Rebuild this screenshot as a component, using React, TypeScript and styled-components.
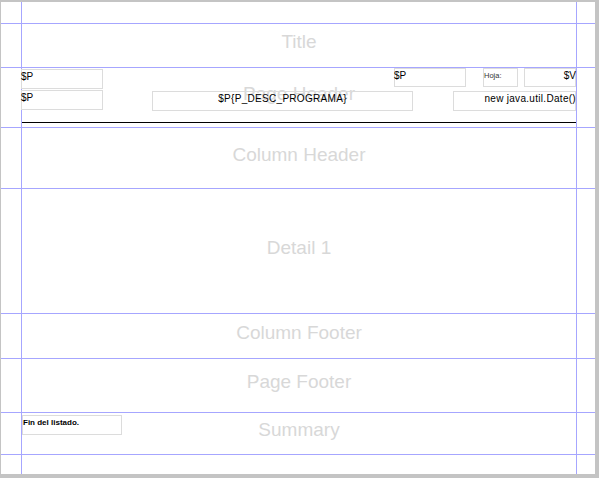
import React from "react";
import styled, { createGlobalStyle } from "styled-components";

const Global = createGlobalStyle`
  html, body { margin: 0; padding: 0; background: #c4c4c4; }
  body { font-family: "Liberation Sans", Arial, sans-serif; }
`;

const GUIDE = "#a6a6ff";

const Page = styled.div`
  margin: 2px 0 0 1px;
  width: 594px;
  background: #ffffff;
  display: flex;
  flex-direction: column;
`;

const Row = styled.div<{ $h: number; $last?: boolean }>`
  display: grid;
  grid-template-columns: 21px 555px 18px;
  height: ${(p) => p.$h}px;
  border-bottom: ${(p) => (p.$last ? "none" : `1px solid ${GUIDE}`)};
`;

const Margin = styled.div`
  box-sizing: border-box;
  border-right: 1px solid ${GUIDE};
`;

const Band = styled.div`
  box-sizing: border-box;
  border-right: 1px solid ${GUIDE};
  position: relative;
  display: flex;
  align-items: center;
  justify-content: center;
  padding-bottom: 7px;
`;

const Side = styled.div``;

const BandLabel = styled.span`
  font-family: "Liberation Sans", Arial, sans-serif;
  font-size: 19px;
  color: #d8d8d8;
  white-space: nowrap;
  user-select: none;
`;

const Field = styled.div<{
  $x: number;
  $y: number;
  $w: number;
  $h: number;
  $align?: "left" | "center" | "right";
  $size?: number;
  $bold?: boolean;
  $spacing?: number;
  $color?: string;
}>`
  position: absolute;
  box-sizing: border-box;
  left: ${(p) => p.$x}px;
  top: ${(p) => p.$y}px;
  width: ${(p) => p.$w}px;
  height: ${(p) => p.$h}px;
  border: 1px solid #dcdcdc;
  padding: 1px 0 0 0;
  text-align: ${(p) => p.$align ?? "left"};
  font-family: "Liberation Sans", Arial, sans-serif;
  font-size: ${(p) => p.$size ?? 10}px;
  font-weight: ${(p) => (p.$bold ? 700 : 400)};
  letter-spacing: ${(p) => p.$spacing ?? 0}px;
  line-height: 12px;
  color: ${(p) => p.$color ?? "#000"};
  white-space: nowrap;
  overflow: visible;
`;

const FieldText = styled.span<{ $shift?: number }>`
  position: relative;
  left: ${(p) => p.$shift ?? 0}px;
`;

const Rule = styled.div<{ $y: number }>`
  position: absolute;
  left: 0;
  right: 0;
  top: ${(p) => p.$y}px;
  height: 1px;
  background: #000;
`;

type BandDef = { h: number; label?: string; key: string; last?: boolean };

const bands: BandDef[] = [
  { key: "top", h: 21 },
  { key: "title", h: 43, label: "Title" },
  { key: "ph", h: 59, label: "Page Header" },
  { key: "ch", h: 60, label: "Column Header" },
  { key: "d1", h: 124, label: "Detail 1" },
  { key: "cf", h: 44, label: "Column Footer" },
  { key: "pf", h: 53, label: "Page Footer" },
  { key: "sum", h: 41, label: "Summary" },
  { key: "bottom", h: 19, last: true },
];

const PageHeaderContent = () => (
  <>
    <Field $x={-1} $y={1} $w={82} $h={20}>
      <FieldText $shift={-1}>$P</FieldText>
    </Field>
    <Field $x={-1} $y={22} $w={82} $h={20}>
      <FieldText $shift={-1}>$P</FieldText>
    </Field>
    <Field $x={130} $y={23} $w={261} $h={20} $align="center" $spacing={0.3}>
      $P{"{"}P_DESC_PROGRAMA{"}"}
    </Field>
    <Field $x={372} $y={0} $w={72} $h={19}>
      <FieldText $shift={-1}>$P</FieldText>
    </Field>
    <Field $x={461} $y={0} $w={35} $h={19} $size={7.5} $color="#333">
      Hoja:
    </Field>
    <Field $x={502} $y={0} $w={52} $h={19} $align="right">
      <FieldText $shift={1}>$V</FieldText>
    </Field>
    <Field $x={431} $y={23} $w={123} $h={20} $align="right" $spacing={0.3}>
      <FieldText $shift={1}>new java.util.Date()</FieldText>
    </Field>
    <Rule $y={54} />
  </>
);

const SummaryContent = () => (
  <Field $x={0} $y={2} $w={100} $h={20} $size={8} $bold>
    Fin del listado.
  </Field>
);

export default function App() {
  return (
    <>
      <Global />
      <Page>
        {bands.map((b) => (
          <Row key={b.key} $h={b.h} $last={b.last}>
            <Margin />
            <Band>
              {b.label && <BandLabel>{b.label}</BandLabel>}
              {b.key === "ph" && <PageHeaderContent />}
              {b.key === "sum" && <SummaryContent />}
            </Band>
            <Side />
          </Row>
        ))}
      </Page>
    </>
  );
}
